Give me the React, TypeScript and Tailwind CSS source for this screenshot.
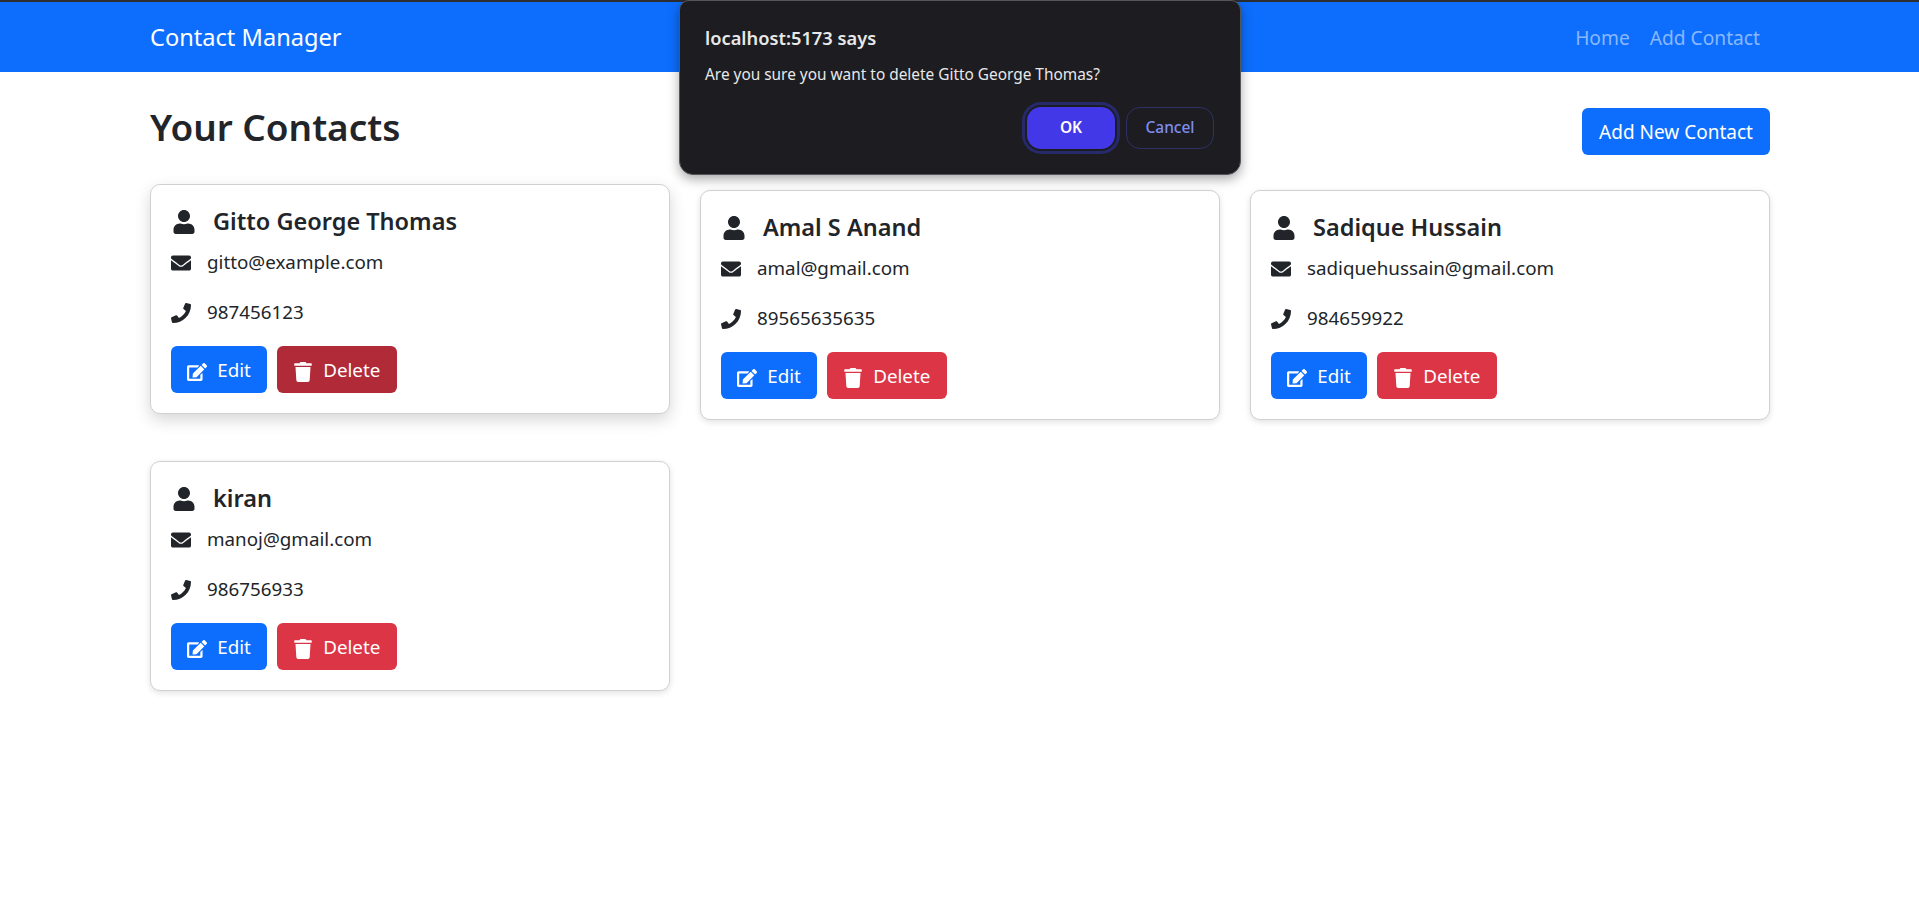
import { FaUser, FaEnvelope, FaPhone, FaEdit, FaTrash } from "react-icons/fa";

interface Contact {
  name: string;
  email: string;
  phone: string;
}

const contacts: Contact[] = [
  { name: "Gitto George Thomas", email: "gitto@example.com", phone: "987456123" },
  { name: "Amal S Anand", email: "amal@gmail.com", phone: "89565635635" },
  { name: "Sadique Hussain", email: "sadiquehussain@gmail.com", phone: "984659922" },
  { name: "kiran", email: "manoj@gmail.com", phone: "986756933" },
];

function ContactCard({ contact, hovered }: { contact: Contact; hovered: boolean }) {
  return (
    <div
      className={`h-[230px] rounded-[10px] border border-[#d0d1d2] bg-white px-[20px] pt-[18px] text-[#212529] ${
        hovered
          ? "-translate-y-[6px] shadow-[0_6px_16px_rgba(0,0,0,0.16)]"
          : "shadow-[0_2px_6px_rgba(0,0,0,0.12)]"
      }`}
    >
      <div className="flex h-[36px] items-center">
        <FaUser className="ml-[1px] h-[24px] w-[24px] translate-y-[1px]" />
        <h5 className="ml-[17px] text-[23.5px] leading-[36px] font-semibold">{contact.name}</h5>
      </div>
      <div className="mt-[7px] flex h-[32px] items-center text-[18.8px]">
        <FaEnvelope className="h-[20px] w-[20px] translate-y-[1px]" />
        <span className="ml-[16px]">{contact.email}</span>
      </div>
      <div className="mt-[18px] flex h-[32px] items-center text-[18.8px]">
        <FaPhone className="h-[20px] w-[20px] translate-y-[1px]" />
        <span className="ml-[16px]">{contact.phone}</span>
      </div>
      <div className="mt-[18px] flex gap-[10px]">
        <button className="flex h-[47px] w-[96px] items-center justify-center gap-[10px] rounded-[6px] bg-[#0d6efd] pt-[2px] text-[18.8px] text-white">
          <FaEdit className="h-[20px] w-[20px] translate-y-[1px]" />
          Edit
        </button>
        <button
          className={`flex h-[47px] w-[119.5px] items-center justify-center gap-[10px] rounded-[6px] pt-[2px] text-[18.8px] text-white ${
            hovered ? "bg-[#b02a37]" : "bg-[#dc3545]"
          }`}
        >
          <FaTrash className="h-[20px] w-[20px] translate-y-[1px]" />
          Delete
        </button>
      </div>
    </div>
  );
}

function ConfirmDialog() {
  return (
    <div className="absolute top-0 left-[679px] h-[175px] w-[562px] rounded-b-[14px] rounded-t-[10px] border border-[#55565a] bg-[#1c1c21] pt-[25px] pr-[26px] pl-[25px] text-[#e8e8e8] shadow-[0_4px_12px_rgba(0,0,0,0.35)]">
      <div className="text-[18.3px] leading-[24px] font-semibold">localhost:5173 says</div>
      <div className="mt-[15px] text-[15.4px] leading-[20px]">
        Are you sure you want to delete Gitto George Thomas?
      </div>
      <div className="mt-[22px] flex justify-end gap-[11px]">
        <button className="h-[42px] w-[88px] rounded-[14px] bg-[#4338e8] text-[15.5px] font-semibold text-white ring-[3px] ring-[#26296a] ring-offset-[2px] ring-offset-[#1c1c21]">
          OK
        </button>
        <button className="h-[42px] w-[88px] rounded-[14px] border border-[#2e3166] text-[15.5px] font-medium text-[#7f8cf0]">
          Cancel
        </button>
      </div>
    </div>
  );
}

export default function App() {
  return (
    <div className="relative min-h-[921px] bg-white font-['Noto_Sans',sans-serif]">
      <div className="h-[2px] bg-[#2b2d31]" />
      <nav className="h-[70px] bg-[#0d6efd]">
        <div className="mr-[149px] ml-[150px] flex h-full items-center justify-between">
          <span className="translate-y-[1px] text-[23.6px] text-white">Contact Manager</span>
          <div className="flex translate-y-[1px] gap-[20px] pr-[10px] text-[19.2px] text-[#8ab8fe]">
            <span>Home</span>
            <span>Add Contact</span>
          </div>
        </div>
      </nav>
      <main className="mr-[149px] ml-[150px]">
        <div className="flex h-[118px] items-start justify-between">
          <h2 className="mt-[31px] text-[36.9px] leading-[48px] font-semibold text-[#212529]">Your Contacts</h2>
          <button className="mt-[36px] h-[47px] w-[188px] rounded-[6px] bg-[#0d6efd] pt-[2px] text-[19px] text-white">
            Add New Contact
          </button>
        </div>
        <div className="grid grid-cols-3 gap-x-[30px] gap-y-[41px]">
          {contacts.map((c, i) => (
            <ContactCard key={c.email} contact={c} hovered={i === 0} />
          ))}
        </div>
      </main>
      <ConfirmDialog />
    </div>
  );
}
